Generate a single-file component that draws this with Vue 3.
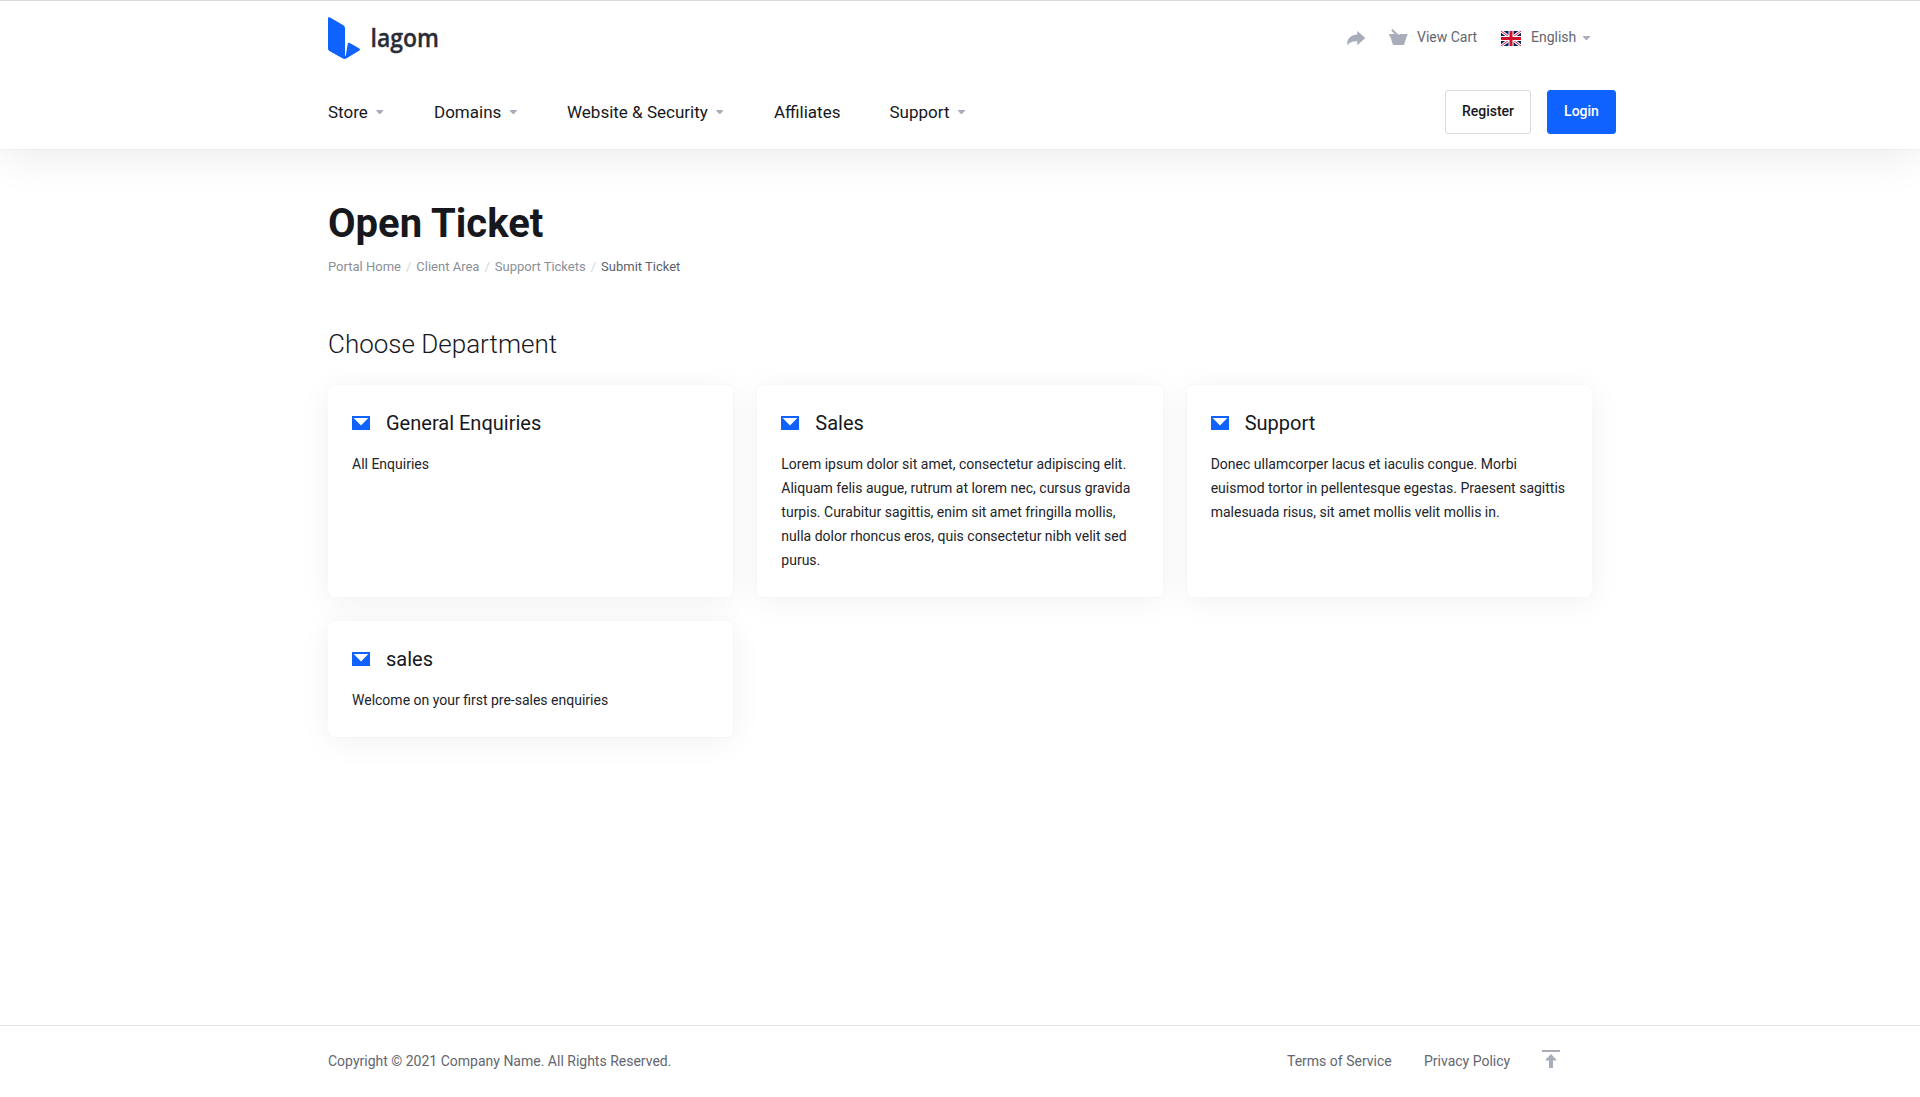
<script setup>
const nav = [
  { id: 'store', label: 'Store', menu: true },
  { id: 'domains', label: 'Domains', menu: true },
  { id: 'website', label: 'Website & Security', menu: true },
  { id: 'affiliates', label: 'Affiliates', menu: false },
  { id: 'support', label: 'Support', menu: true },
]

const crumbs = ['Portal Home', 'Client Area', 'Support Tickets', 'Submit Ticket']

const departments = [
  { name: 'General Enquiries', text: 'All Enquiries' },
  {
    name: 'Sales',
    text: 'Lorem ipsum dolor sit amet, consectetur adipiscing elit. Aliquam felis augue, rutrum at lorem nec, cursus gravida turpis. Curabitur sagittis, enim sit amet fringilla mollis, nulla dolor rhoncus eros, quis consectetur nibh velit sed purus.',
  },
  {
    name: 'Support',
    text: 'Donec ullamcorper lacus et iaculis congue. Morbi euismod tortor in pellentesque egestas. Praesent sagittis malesuada risus, sit amet mollis velit mollis in.',
  },
  { name: 'sales', text: 'Welcome on your first pre-sales enquiries' },
]
</script>

<template>
  <div class="page">
    <header class="header">
      <div class="container topbar">
        <a class="logo">
          <svg width="140" height="44" viewBox="0 0 140 44">
            <path fill="#1062fe" d="M0 1.2Q0 0 1.6.3L15.4 8.2Q17 9.200 17 11V38.500Q17.300 40 17.900 38L19.700 27Q20.200 25.300 21.800 26.100L31.400 31.600Q32.700 32.500 31.400 33.400L18.600 41.300Q16.500 42.500 14.400 41.300L1.400 34Q0 33.100 0 31.500Z" />
            <text class="logo-text" x="42.500" y="30" textLength="68.500" lengthAdjust="spacingAndGlyphs">lagom</text>
          </svg>
        </a>
        <div class="tools">
          <svg class="share" width="19" height="15" viewBox="0 0 19 15">
            <path fill="#a9acba" d="M10.300 0L18.300 7L10.300 14.300V10.300C6 10 3 11 .3 14.200V11.500C1 7 4.500 4 10.300 3.600Z" />
          </svg>
          <a class="cart">
            <svg width="19" height="16" viewBox="0 0 19 16">
              <path fill="#a9acba" d="M3.600 0L9.500 5.800L11.500 5H18.300V7.600H17.600L15.300 15.300Q15.100 16 14.300 16H4.700Q3.900 16 3.700 15.300L1.300 7.600H.3V5H5.700L2.200 1.500Z" />
            </svg>
            <span>View Cart</span>
          </a>
          <a class="lang">
            <svg width="20" height="15" viewBox="0 0 20 15">
              <rect width="20" height="15" fill="#0a1f66" />
              <path stroke="#fff" stroke-width="3" d="M0 0L20 15M20 0L0 15" />
              <path stroke="#d8233f" stroke-width="1" d="M0 0L20 15M20 0L0 15" />
              <path stroke="#fff" stroke-width="5" d="M10 0V15M0 7.500H20" />
              <path stroke="#d0122d" stroke-width="3" d="M10 0V15M0 7.500H20" />
            </svg>
            <span>English</span>
            <i class="caret"></i>
          </a>
        </div>
      </div>
      <div class="container navbar">
        <nav class="nav">
          <a v-for="item in nav" :key="item.id" :class="['nav-item', item.id]">
            {{ item.label }}<i v-if="item.menu" class="caret"></i>
          </a>
        </nav>
        <div class="actions">
          <button class="btn register">Register</button>
          <button class="btn login">Login</button>
        </div>
      </div>
    </header>

    <main class="container main">
      <h1>Open Ticket</h1>
      <ol class="crumbs">
        <li v-for="crumb in crumbs" :key="crumb">{{ crumb }}</li>
      </ol>
      <h2>Choose Department</h2>
      <div class="grid">
        <a v-for="d in departments" :key="d.name" class="card">
          <h3>
            <svg width="18" height="14" viewBox="0 0 18 14">
              <path fill="#1062fe" fill-rule="evenodd" d="M0 0H18V14H0ZM1.700 2L9 9.600L16.300 2Z" />
            </svg>
            {{ d.name }}
          </h3>
          <p>{{ d.text }}</p>
        </a>
      </div>
    </main>

    <footer class="footer">
      <div class="container footer-row">
        <span>Copyright © 2021 Company Name. All Rights Reserved.</span>
        <div class="footer-links">
          <a class="terms">Terms of Service</a>
          <a class="privacy">Privacy Policy</a>
          <svg class="to-top" width="18" height="18" viewBox="0 0 18 18">
            <path fill="#a9acba" d="M0 0H18V2H0ZM9 4L14.300 9.500V10.500H11V18H7V10.500H3.700V9.500Z" />
          </svg>
        </div>
      </div>
    </footer>
  </div>
</template>

<style>
body {
  margin: 0;
  background: #fff;
}
</style>

<style scoped>
.page {
  box-sizing: border-box;
  height: 1097px;
  display: flex;
  flex-direction: column;
  overflow: hidden;
  border-top: 1px solid #d9d9d9;
  background: #fff;
  color: #16181d;
  font-family: Roboto, sans-serif;
  font-size: 14px;
  line-height: 24px;
}
.container {
  box-sizing: border-box;
  width: 1264px;
  margin: 0 auto;
}
svg {
  display: block;
  flex: none;
}
.header {
  height: 148px;
  background: #fff;
  box-shadow: 0 8px 40px rgba(0, 0, 0, 0.08), 0 0 1px rgba(0, 0, 0, 0.15);
}
.topbar {
  display: flex;
  justify-content: space-between;
  height: 74px;
  padding-top: 16px;
}
.logo-text {
  font: 600 25px "Open Sans", sans-serif;
  fill: #2a2d38;
  stroke: #2a2d38;
  stroke-width: 0.3px;
}
.tools {
  display: flex;
  height: 40px;
  color: #636670;
}
.share {
  margin: 14px 23px 0 0;
}
.cart,
.lang {
  display: flex;
  line-height: 40px;
}
.cart svg {
  margin: 12px 9px 0 0;
}
.cart span {
  width: 84px;
}
.lang svg {
  margin: 14px 10px 0 0;
}
.lang span {
  width: 46px;
}
.caret {
  display: inline-block;
  width: 7px;
  height: 4px;
  background: #a9acba;
  clip-path: polygon(0 0, 100% 0, 100% 20%, 57% 100%, 43% 100%, 0 20%);
}
.lang .caret {
  margin: 19px 2px 0 6px;
}
.navbar {
  display: flex;
  justify-content: space-between;
  padding-top: 15px;
}
.nav {
  display: flex;
  font-size: 17px;
  line-height: 44px;
}
.nav-item {
  white-space: nowrap;
}
.nav .caret {
  margin-left: 8.500px;
  vertical-align: 4px;
}
.store { width: 106px; }
.domains { width: 133px; }
.website { width: 207px; }
.affiliates { width: 115.500px; }
.actions {
  display: flex;
  gap: 16px;
  margin-right: -24px;
}
.btn {
  box-sizing: border-box;
  height: 44px;
  padding: 0 0 2px;
  border: 1px solid #dcdde0;
  border-radius: 3px;
  background: #fff;
  color: #16181d;
  font: 500 14px Roboto, sans-serif;
}
.register { width: 86px; }
.login {
  width: 69px;
  border-color: #1062fe;
  background: #1062fe;
  color: #fff;
}
.main {
  flex: 1;
}
h1 {
  margin: 49px 0 0;
  font-size: 40px;
  line-height: 52px;
  font-weight: 700;
}
.crumbs {
  display: flex;
  margin: 6px 0 0;
  padding: 0;
  list-style: none;
  font-size: 13px;
  line-height: 22px;
  color: #8c8f99;
}
.crumbs li + li::before {
  content: "/";
  margin: 0 5px;
  color: #d5d7de;
}
.crumbs li:last-child {
  color: #5c5f6b;
}
h2 {
  margin: 48px 0 0;
  font-size: 26px;
  line-height: 36px;
  font-weight: 300;
}
.grid {
  display: grid;
  grid-template-columns: repeat(3, 1fr);
  gap: 24px;
  margin-top: 23px;
}
.card {
  padding: 24px 24px 25px;
  border-radius: 6px;
  background: #fff;
  box-shadow: 0 4px 32px rgba(0, 0, 0, 0.06), 0 0 1px rgba(0, 0, 0, 0.08);
}
h3 {
  display: flex;
  align-items: center;
  gap: 16px;
  margin: 0 0 15px;
  font-size: 20px;
  line-height: 28px;
  font-weight: 400;
}
p {
  margin: 0;
  color: #22242a;
}
.footer {
  height: 71px;
  border-top: 1px solid #e4e5e8;
  color: #636670;
}
.footer-row {
  display: flex;
  justify-content: space-between;
  padding-top: 23px;
}
.footer-links {
  display: flex;
  padding-right: 32px;
}
.terms { width: 137px; }
.privacy { width: 118px; }
.to-top { margin-top: 1px; }
</style>
